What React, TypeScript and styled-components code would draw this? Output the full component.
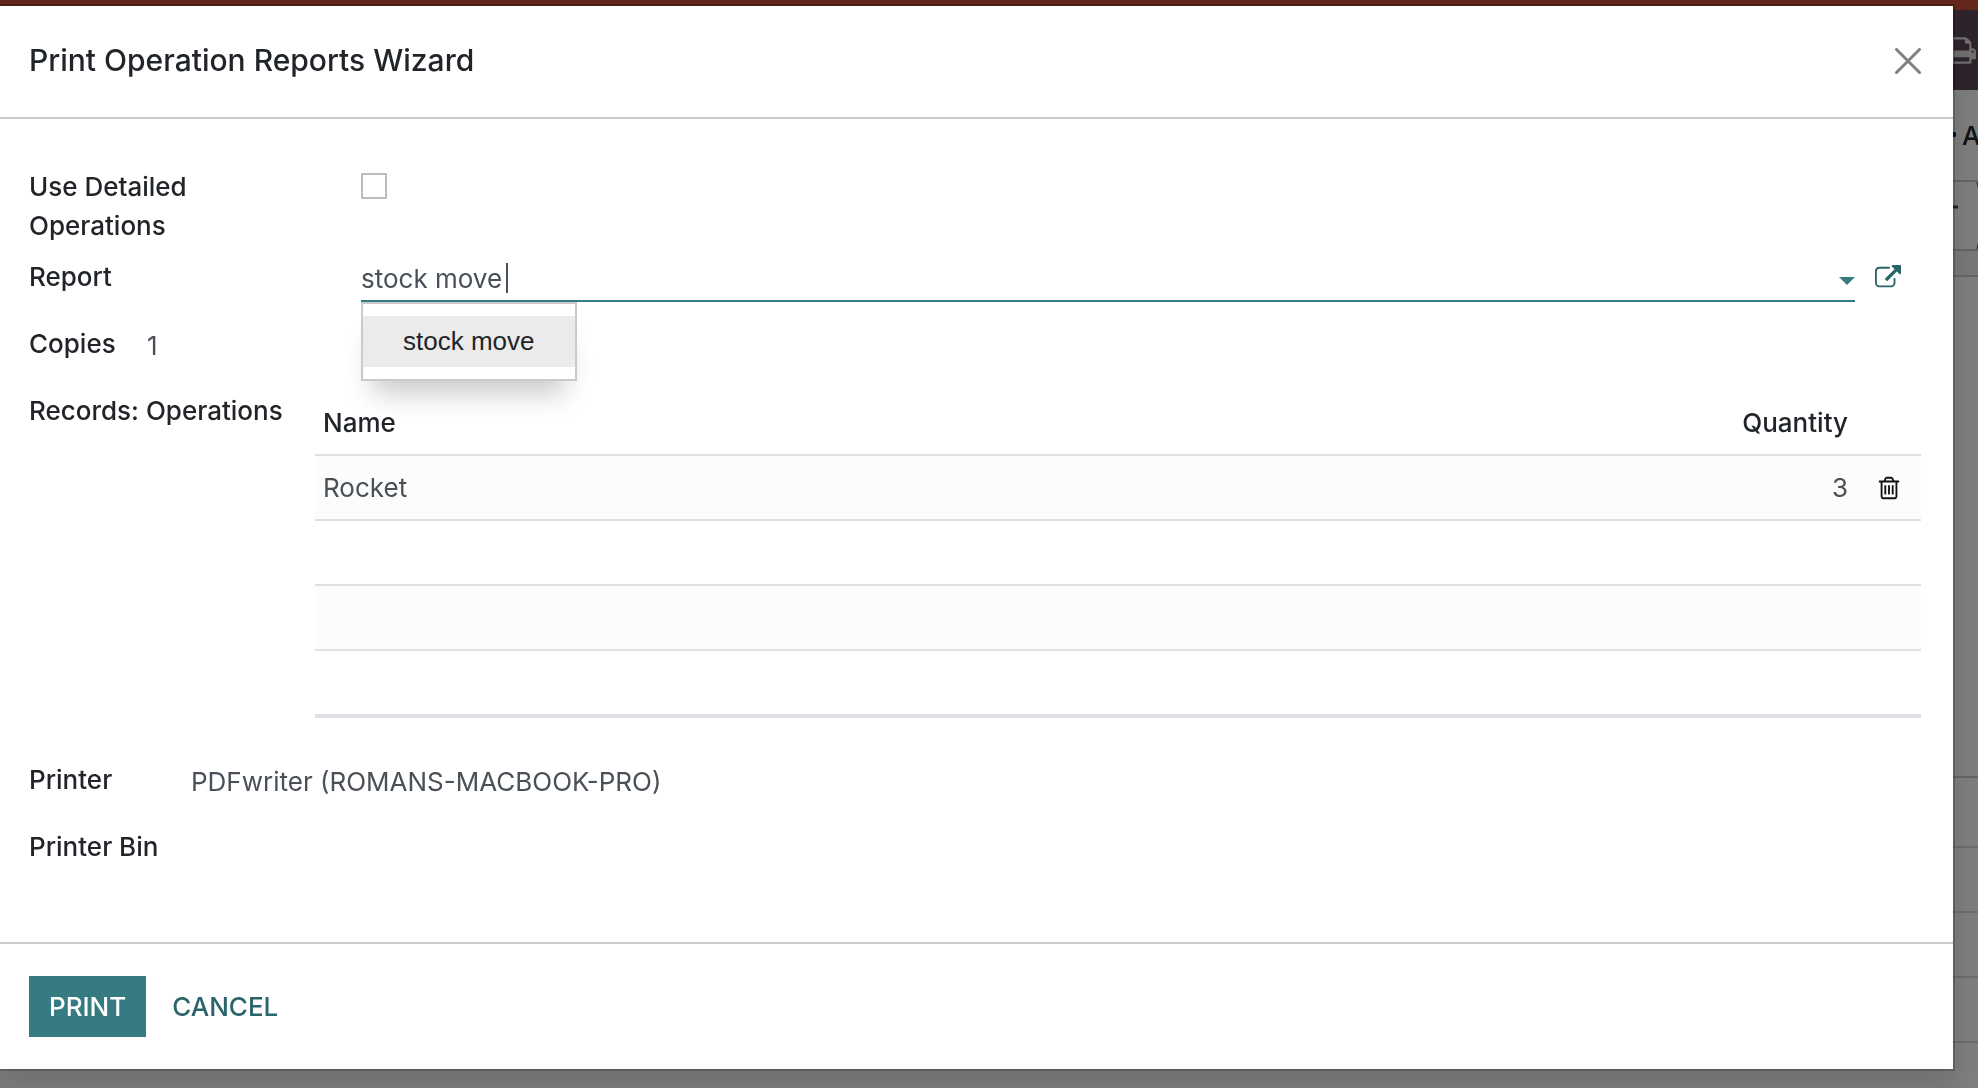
import React, { useState } from "react";
import styled, { createGlobalStyle } from "styled-components";

const color = {
  text: "#212529",
  value: "#495057",
  teal: "#357b81",
  tealDark: "#29656a",
  line: "#c9cacf",
  tableLine: "#dfe0e5",
};

const GlobalStyle = createGlobalStyle`
  *, *::before, *::after { box-sizing: border-box; }
  body {
    margin: 0;
    color: ${color.text};
    font: 500 26px/39px Inter, "Liberation Sans", sans-serif;
  }
  button, input { font: inherit; color: inherit; border-radius: 0; }
`;

/* ---- page behind the dialog ---- */

const Page = styled.div`
  min-height: 100vh;
  overflow: hidden;
  background: #ffffff;
`;

const TopStripe = styled.div`
  height: 10px;
  background: #c84e36;
`;

const NavBar = styled.div`
  display: flex;
  align-items: center;
  justify-content: flex-end;
  height: 80px;
  padding-right: 1px;
  background: #5e4858;
  color: #e4e0e3;
`;

const PageRow = styled.div<{ $height: number; $line?: string; $fill?: string }>`
  display: flex;
  align-items: center;
  justify-content: flex-end;
  height: ${(p) => p.$height}px;
  border-bottom: 2px solid ${(p) => p.$line ?? "#dcdcde"};
  background: ${(p) => p.$fill ?? "transparent"};
`;

const ActionMenu = styled.div`
  display: flex;
  align-items: center;
  gap: 6px;
  width: 30px;
  white-space: nowrap;
  svg { flex-shrink: 0; }
`;

/* ---- dialog ---- */

const Overlay = styled.div`
  position: fixed;
  inset: 0;
  padding: 6px 25px 0 0;
  overflow: hidden;
  background: rgba(0, 0, 0, 0.5);
`;

const Dialog = styled.section`
  background: #ffffff;
  box-shadow: 0 0 0 2px rgba(0, 0, 0, 0.2), 0 16px 32px 4px rgba(0, 0, 0, 0.13);
`;

const DialogHeader = styled.header`
  display: flex;
  align-items: center;
  justify-content: space-between;
  height: 113px;
  padding: 0 32px 2px 29px;
  border-bottom: 2px solid ${color.line};
`;

const Title = styled.h1`
  margin: 0;
  font-size: 30px;
  font-weight: 550;
`;

const IconButton = styled.button`
  display: flex;
  padding: 0;
  border: 0;
  background: none;
  cursor: pointer;
`;

const DialogBody = styled.div`
  display: flex;
  flex-direction: column;
  gap: 12px;
  padding: 48px 32px 60px 29px;
`;

const Field = styled.div<{ $label: number }>`
  display: grid;
  grid-template-columns: ${(p) => p.$label}px minmax(0, 1fr);
  column-gap: 32px;
  align-items: start;
  min-height: 55px;
`;

const Label = styled.label`
  max-width: 260px;
`;

const CheckBox = styled.input`
  appearance: none;
  width: 26px;
  height: 26px;
  margin: 6px 0 0;
  border: 2px solid #bdbdbd;
  background: #ffffff;
  &:checked { background: ${color.teal}; }
`;

const TextBox = styled.input<{ $active?: boolean }>`
  display: block;
  width: 100%;
  height: 45px;
  padding: 0;
  border: 0;
  border-bottom: 2px solid ${(p) => (p.$active ? color.teal : "transparent")};
  outline: 0;
  background: none;
  color: ${color.value};
  font-weight: 400;
`;

const ReportLine = styled.div`
  display: flex;
  align-items: flex-start;
  gap: 20px;
  padding-right: 20px;
`;

const Combo = styled.div`
  position: relative;
  flex: 1;
`;

const Caret = styled.span`
  position: absolute;
  top: 6px;
  left: 145px;
  width: 2px;
  height: 30px;
  background: ${color.value};
`;

const Arrow = styled.span`
  position: absolute;
  top: 20px;
  right: 0;
  border: 8px solid transparent;
  border-top-color: ${color.teal};
  border-bottom: 0;
`;

const Menu = styled.ul`
  position: absolute;
  top: 100%;
  left: 0;
  z-index: 2;
  margin: 0;
  padding: 12px 0;
  border: 2px solid ${color.line};
  background: #ffffff;
  box-shadow: 0 24px 28px -12px rgba(0, 0, 0, 0.22);
  list-style: none;
`;

const MenuItem = styled.li`
  padding: 0 40px;
  background: #ebebeb;
  font: 400 26px/51px "Liberation Sans", Arial, sans-serif;
  white-space: nowrap;
`;

const OpenRecord = styled(IconButton)`
  padding-top: 8px;
  color: ${color.tealDark};
`;

const Table = styled.table`
  width: 100%;
  margin-bottom: 30px;
  border-collapse: separate;
  border-spacing: 0;
  border-bottom: 2px solid ${color.tableLine};
`;

const Row = styled.tr<{ $shaded?: boolean }>`
  background: ${(p) => (p.$shaded ? "#fcfcfc" : "transparent")};
`;

const HeadCell = styled.th<{ $right?: boolean; $width?: number }>`
  width: ${(p) => (p.$width ? `${p.$width}px` : "auto")};
  height: 65px;
  padding: 0 8px;
  border-bottom: 2px solid ${color.tableLine};
  font-weight: 500;
  text-align: ${(p) => (p.$right ? "right" : "left")};
`;

const Cell = styled.td<{ $right?: boolean }>`
  height: 65px;
  padding: 0 8px;
  border-bottom: 2px solid ${color.tableLine};
  color: ${color.value};
  font-weight: 400;
  text-align: ${(p) => (p.$right ? "right" : "left")};
`;

const DeleteButton = styled(IconButton)`
  margin-left: 12px;
  color: #111111;
`;

const DialogFooter = styled.footer`
  display: flex;
  gap: 6px;
  padding: 32px 29px;
  border-top: 2px solid ${color.line};
`;

const Button = styled.button<{ $primary?: boolean }>`
  height: 61px;
  padding: 0 20px;
  border: 0;
  background: ${(p) => (p.$primary ? color.teal : "transparent")};
  color: ${(p) => (p.$primary ? "#ffffff" : color.tealDark)};
  font-weight: 500;
  text-transform: uppercase;
  cursor: pointer;
`;

/* ---- icons ---- */

const Glyph = ({ size, d }: { size: number; d: string }) => (
  <svg width={size} height={size} viewBox="0 0 1792 1792" fill="currentColor" aria-hidden="true">
    <path d={d} />
  </svg>
);

const PRINTER =
  "M448 1536h896v-256h-896v256zm0-640h896v-384h-160q-40 0-68-28t-28-68v-160h-640v640zm1152 64q0-26-19-45t-45-19-45 19-19 45 19 45 45 19 45-19 19-45zm128 0v416q0 13-9.5 22.5t-22.5 9.5h-224v160q0 40-28 68t-68 28h-960q-40 0-68-28t-28-68v-160h-224q-13 0-22.5-9.5t-9.5-22.5v-416q0-79 56.5-135.5t135.5-56.5h64v-544q0-40 28-68t68-28h672q40 0 88 20t76 48l152 152q28 28 48 76t20 88v256h64q79 0 135.5 56.5t56.5 135.5z";
const TRASH =
  "M704 736v576q0 14-9 23t-23 9h-64q-14 0-23-9t-9-23v-576q0-14 9-23t23-9h64q14 0 23 9t9 23zm256 0v576q0 14-9 23t-23 9h-64q-14 0-23-9t-9-23v-576q0-14 9-23t23-9h64q14 0 23 9t9 23zm256 0v576q0 14-9 23t-23 9h-64q-14 0-23-9t-9-23v-576q0-14 9-23t23-9h64q14 0 23 9t9 23zm128 724v-948h-896v948q0 22 7 40.5t14.5 27 10.5 8.5h832q3 0 10.5-8.5t14.5-27 7-40.5zm-672-1076h448l-48-117q-7-9-17-11h-317q-10 2-17 11zm928 32v64q0 14-9 23t-23 9h-96v948q0 83-47 143.5t-113 60.5h-832q-66 0-113-58.5t-47-141.5v-952h-96q-14 0-23-9t-9-23v-64q0-14 9-23t23-9h309l70-167q15-37 54-63t79-26h320q40 0 79 26t54 63l70 167h309q14 0 23 9t9 23z";
const EXTERNAL =
  "M1408 928v320q0 119-84.5 203.5t-203.5 84.5h-832q-119 0-203.5-84.5t-84.5-203.5v-832q0-119 84.5-203.5t203.5-84.5h704q14 0 23 9t9 23v64q0 14-9 23t-23 9h-704q-66 0-113 47t-47 113v832q0 66 47 113t113 47h832q66 0 113-47t47-113v-320q0-14 9-23t23-9h64q14 0 23 9t9 23zm384-864v512q0 26-19 45t-45 19-45-19l-176-176-652 652q-10 10-23 10t-23-10l-114-114q-10-10-10-23t10-23l652-652-176-176q-19-19-19-45t19-45 45-19h512q26 0 45 19t19 45z";

const CloseIcon = () => (
  <svg width="26" height="26" viewBox="0 0 26 26" stroke="#7f7f7f" strokeWidth="3" strokeLinecap="round" aria-hidden="true">
    <path d="M1.500 1.500l23 23M24.500 1.500l-23 23" />
  </svg>
);

const GearEdge = () => (
  <svg width="8" height="20" viewBox="0 0 8 20" fill="#222222" aria-hidden="true">
    <path d="M0 7h7l1 1v3l-1 1H0z" />
  </svg>
);

const StatusArrow = () => (
  <svg width="25" height="67" viewBox="0 0 25 67" fill="none" aria-hidden="true">
    <path d="M0 25h5" stroke="#444444" strokeWidth="3" />
    <path d="M24 0l8 33-8 34" stroke="#444444" strokeWidth="1" />
  </svg>
);

const lines = [{ name: "Rocket", quantity: "3" }, null, null, null];

export default function App() {
  const [report, setReport] = useState("stock move ");
  const [copies, setCopies] = useState("1");
  const [printer, setPrinter] = useState("PDFwriter (ROMANS-MACBOOK-PRO)");

  return (
    <Page>
      <GlobalStyle />
      <TopStripe />
      <NavBar>
        <Glyph size={31} d={PRINTER} />
      </NavBar>
      <PageRow $height={92} $line="#c9cacf">
        <ActionMenu>
          <GearEdge />
          <span>A</span>
        </ActionMenu>
      </PageRow>
      <PageRow $height={69} $line="#c9cacf">
        <StatusArrow />
      </PageRow>
      <PageRow $height={26} $line="#c9cacf" $fill="#f1f2f6" />
      <PageRow $height={501} $line="#c9cacf" />
      <PageRow $height={70} />
      <PageRow $height={65} />
      <PageRow $height={65} />
      <PageRow $height={65} />

      <Overlay>
        <Dialog role="dialog" aria-labelledby="wizard-title">
          <DialogHeader>
            <Title id="wizard-title">Print Operation Reports Wizard</Title>
            <IconButton type="button" aria-label="Close">
              <CloseIcon />
            </IconButton>
          </DialogHeader>

          <DialogBody>
            <Field $label={300}>
              <Label htmlFor="detailed">
                Use Detailed
                <br />
                Operations
              </Label>
              <CheckBox id="detailed" type="checkbox" />
            </Field>

            <Field $label={300}>
              <Label htmlFor="report">Report</Label>
              <ReportLine>
                <Combo>
                  <TextBox
                    id="report"
                    $active
                    value={report}
                    onChange={(e) => setReport(e.target.value)}
                  />
                  <Caret />
                  <Arrow />
                  <Menu role="listbox" aria-label="Report">
                    <MenuItem role="option" aria-selected="true">stock move</MenuItem>
                  </Menu>
                </Combo>
                <OpenRecord type="button" aria-label="Open report">
                  <Glyph size={26} d={EXTERNAL} />
                </OpenRecord>
              </ReportLine>
            </Field>

            <Field $label={86}>
              <Label htmlFor="copies">Copies</Label>
              <TextBox id="copies" value={copies} onChange={(e) => setCopies(e.target.value)} />
            </Field>

            <Field $label={254}>
              <span id="records">Records: Operations</span>
              <Table aria-labelledby="records">
                <thead>
                  <Row>
                    <HeadCell>Name</HeadCell>
                    <HeadCell $right $width={200}>Quantity</HeadCell>
                    <HeadCell $width={65} />
                  </Row>
                </thead>
                <tbody>
                  {lines.map((line, i) => (
                    <Row key={i} $shaded={i % 2 === 0}>
                      <Cell>{line?.name}</Cell>
                      <Cell $right>{line?.quantity}</Cell>
                      <Cell>
                        {line && (
                          <DeleteButton type="button" aria-label="Delete row">
                            <Glyph size={26} d={TRASH} />
                          </DeleteButton>
                        )}
                      </Cell>
                    </Row>
                  ))}
                </tbody>
              </Table>
            </Field>

            <Field $label={130}>
              <Label htmlFor="printer">Printer</Label>
              <TextBox id="printer" value={printer} onChange={(e) => setPrinter(e.target.value)} />
            </Field>

            <Field $label={130}>
              <Label htmlFor="bin">Printer Bin</Label>
              <TextBox id="bin" />
            </Field>
          </DialogBody>

          <DialogFooter>
            <Button type="button" $primary>Print</Button>
            <Button type="button">Cancel</Button>
          </DialogFooter>
        </Dialog>
      </Overlay>
    </Page>
  );
}
